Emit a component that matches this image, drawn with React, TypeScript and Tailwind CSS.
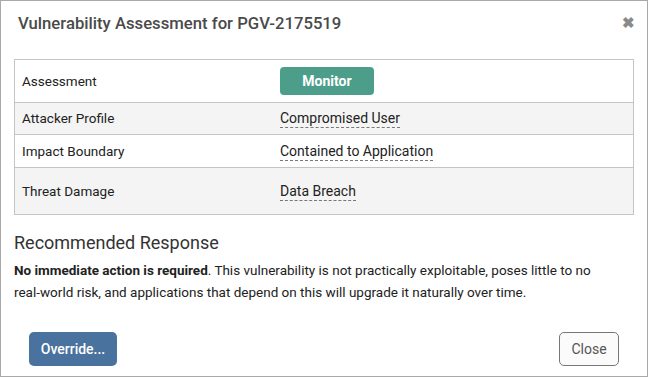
const rows = [
  { label: "Attacker Profile", value: "Compromised User", bg: "bg-[#f4f4f4]", h: "h-[32px]" },
  { label: "Impact Boundary", value: "Contained to Application", bg: "bg-white", h: "h-[33px]" },
  { label: "Threat Damage", value: "Data Breach", bg: "bg-[#f4f4f4]", h: "h-[46px]" },
];

const App = () => {
  return (
    <div className="w-[648px] h-[377px] bg-white border border-[#a9a9a9] flex flex-col font-['Roboto',sans-serif] text-[#222]">
      {/* Header */}
      <div className="flex items-center justify-between h-[45px] pl-[17px] pr-[12px]">
        <h1 className="text-[16.7px] font-medium text-[#4a4a4a]">Vulnerability Assessment for PGV-2175519</h1>
        <button className="text-[#8a8a8a] text-[15px] font-bold leading-none">✖</button>
      </div>

      <div className="px-[13px] mt-[13px]">
        {/* Table */}
        <div className="border border-[#c4c4c4] text-[13.5px]">
          <div className="flex items-center h-[43px] bg-white border-b border-[#c4c4c4]">
            <div className="w-[258px] pl-[7px]">Assessment</div>
            <div className="px-[7px]">
              <span className="inline-flex items-center justify-center w-[94px] h-[28px] rounded-[4px] bg-[#4c9e8a] text-white font-bold text-[14px]">Monitor</span>
            </div>
          </div>
          {rows.map((r, i) => (
            <div key={i} className={`flex items-center ${r.h} ${r.bg} ${i < rows.length - 1 ? "border-b border-[#c4c4c4]" : ""}`}>
              <div className="w-[258px] pl-[7px]">{r.label}</div>
              <div className="px-[7px]">
                <span className="border-b border-dashed border-[#777] leading-[17px] inline-block text-[14px]">{r.value}</span>
              </div>
            </div>
          ))}
        </div>

        {/* Recommended */}
        <h2 className="mt-[16px] text-[18px] text-[#333] leading-[24px]">Recommended Response</h2>
        <p className="mt-[4px] max-w-[590px] text-[13.5px] leading-[22px] text-[#222]">
          <b className="font-bold">No immediate action is required</b>. This vulnerability is not practically exploitable, poses little to no real-world risk, and applications that depend on this will upgrade it naturally over time.
        </p>
      </div>

      {/* Footer */}
      <div className="mt-auto mb-[10px] flex items-center justify-between px-[28px]">
        <button className="w-[88px] h-[34px] rounded-[5px] bg-[#4a729e] text-white text-[14px] font-medium">Override...</button>
        <button className="w-[60px] h-[34px] rounded-[5px] border border-[#777] bg-[#fbfbfb] text-[#555] text-[14px]">Close</button>
      </div>
    </div>
  );
};

export default App;
